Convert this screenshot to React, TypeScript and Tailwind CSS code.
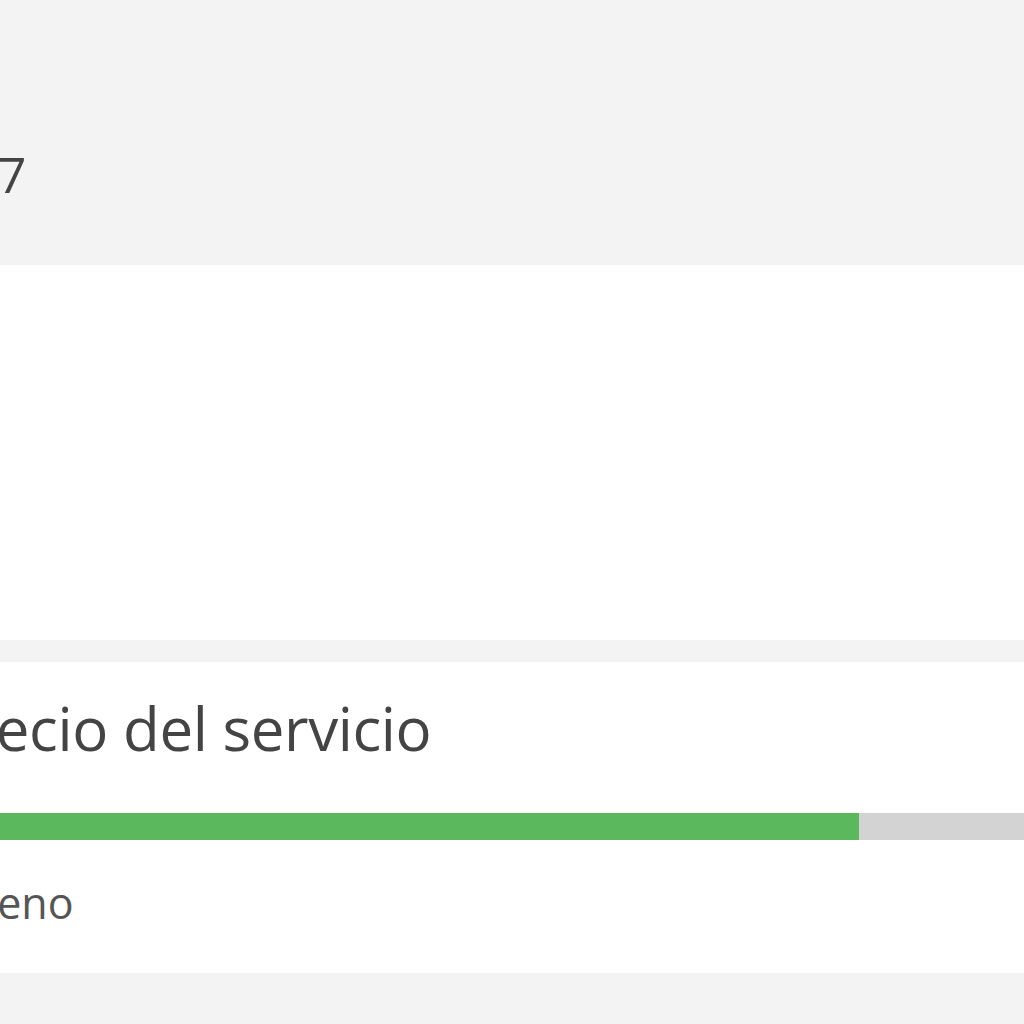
export default function App() {
  const score = 86;

  return (
    <div className="w-[1024px] h-[1024px] overflow-hidden bg-[#f3f3f3] font-['Open_Sans',sans-serif] text-[#444]">
      <div className="-ml-[74px] flex flex-col">
        {/* Header */}
        <div className="h-[265px] flex items-start pt-[149px] pl-[30px]">
          <span className="text-[50px] leading-none font-medium">4.7</span>
        </div>

        {/* Empty card */}
        <div className="h-[375px] bg-white" />

        <div className="h-[22px]" />

        {/* Service rating card */}
        <div className="h-[311px] bg-white pl-[10px] flex flex-col">
          <h2 className="mt-[26px] text-[60px] leading-[80px] tracking-[-0.4px] text-[#444]">Precio del servicio</h2>
          <div className="mt-[45px] h-[27px] w-[1100px] bg-[#d3d3d3]">
            <div className="h-full bg-[#5cb85c]" style={{ width: `${(933 - 10) * 100 / 1100}%` }} />
          </div>
          <p className="mt-[41px] ml-[7px] text-[43px] leading-none text-[#555]">Bueno</p>
        </div>
      </div>
    </div>
  );
}
